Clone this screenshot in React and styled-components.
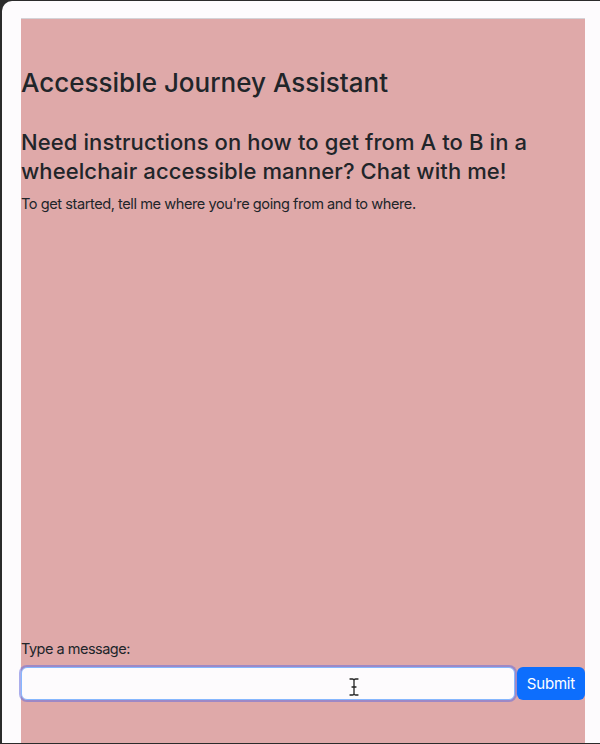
import React from "react";
import styled, { createGlobalStyle } from "styled-components";

const Global = createGlobalStyle`
  html, body {
    margin: 0;
    padding: 0;
    background: #2b2b2b;
    height: 744px;
    overflow: hidden;
  }
  #root {
    height: 744px;
  }
  * {
    box-sizing: border-box;
  }
`;

const Window = styled.div`
  height: 742px;
  margin: 1px 0 0 2px;
  background-color: #fdfbfd;
  border-top-left-radius: 10px;
  padding: 17px 15px 0 19px;
  display: flex;
  flex-direction: column;
  font-family: Inter, "Liberation Sans", Arial, sans-serif;
  color: #212529;
`;

const Panel = styled.main`
  flex: 1;
  display: flex;
  flex-direction: column;
  background-color: #dfa9a9;
  border-top: 1px solid #d4d2d6;
`;

const Title = styled.h1`
  font-size: 26px;
  font-weight: 500;
  line-height: 1.2;
  margin: 48px 0 0;
`;

const Subtitle = styled.h2`
  font-size: 22px;
  font-weight: 500;
  line-height: 29px;
  letter-spacing: 0.1px;
  margin: 30px 0 0;
`;

const Intro = styled.p`
  font-size: 14.6px;
  line-height: 24px;
  letter-spacing: -0.45px;
  margin: 6px 0 0;
`;

const Messages = styled.div`
  flex: 1;
`;

const Label = styled.label`
  font-size: 14.5px;
  line-height: 24px;
  letter-spacing: -0.5px;
  display: block;
`;

const Form = styled.form`
  display: flex;
  align-items: center;
  gap: 2px;
  margin: 6px 0 43px;
  position: relative;
`;

const Input = styled.input`
  flex: 1;
  height: 33px;
  border: 1px solid #86b7fe;
  border-radius: 6px;
  background: #fdfbfd;
  box-shadow: 0 0 0 2px rgba(104, 110, 220, 0.55);
  outline: none;
  font: inherit;
`;

const Button = styled.button`
  height: 33px;
  padding: 0 10px;
  border: none;
  border-radius: 6px;
  background-color: #0d6efd;
  color: #fff;
  font-family: Inter, "Liberation Sans", Arial, sans-serif;
  font-size: 15px;
  letter-spacing: -0.2px;
`;

const Cursor = styled.svg`
  position: absolute;
  left: 327px;
  top: 10px;
`;

function IBeam() {
  return (
    <Cursor width="12" height="20" viewBox="0 0 12 20">
      <path
        d="M2 2h2.5c1 0 1.5.5 1.5 1.5C6 2.5 6.5 2 7.5 2H10M6 3.5v13M2 18h2.5c1 0 1.5-.5 1.5-1.5 0 1 .5 1.5 1.5 1.5H10M4 10h4"
        fill="none"
        stroke="#fff"
        strokeWidth="3"
        strokeLinecap="round"
      />
      <path
        d="M2 2h2.5c1 0 1.5.5 1.5 1.5C6 2.5 6.5 2 7.5 2H10M6 3.5v13M2 18h2.5c1 0 1.5-.5 1.5-1.5 0 1 .5 1.5 1.5 1.5H10M4 10h4"
        fill="none"
        stroke="#222"
        strokeWidth="1.3"
        strokeLinecap="round"
      />
    </Cursor>
  );
}

export default function App() {
  return (
    <>
      <Global />
      <Window>
        <Panel>
          <Title>Accessible Journey Assistant</Title>
          <Subtitle>
            Need instructions on how to get from A to B in a wheelchair
            accessible manner? Chat with me!
          </Subtitle>
          <Intro>
            To get started, tell me where you're going from and to where.
          </Intro>
          <Messages />
          <Label htmlFor="msg">Type a message:</Label>
          <Form onSubmit={(e) => e.preventDefault()}>
            <Input id="msg" type="text" />
            <Button type="submit">Submit</Button>
            <IBeam />
          </Form>
        </Panel>
      </Window>
    </>
  );
}
